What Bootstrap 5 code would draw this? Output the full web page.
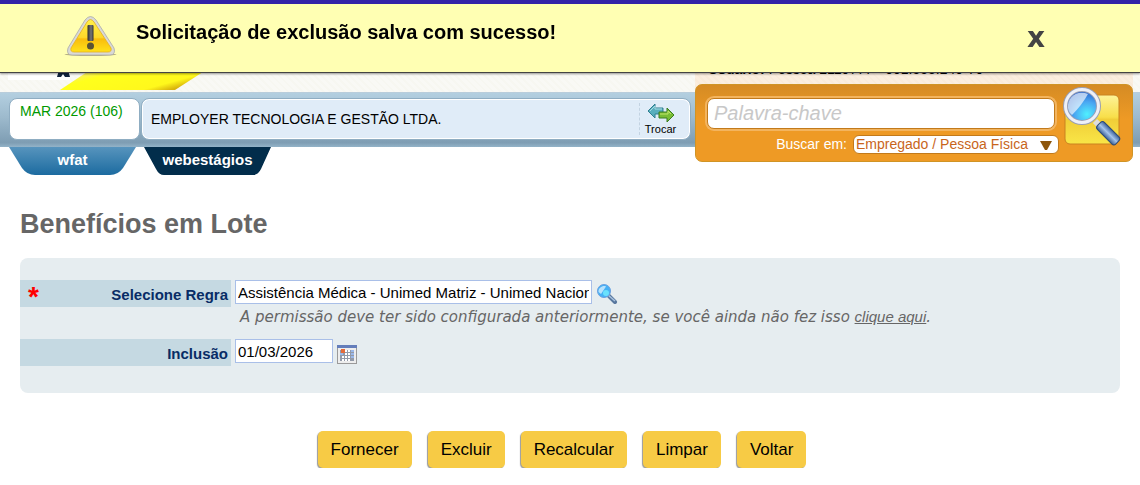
<!DOCTYPE html>
<html lang="pt-BR">
<head>
<meta charset="utf-8">
<meta name="viewport" content="width=device-width, initial-scale=1">
<title>Benefícios em Lote</title>
<link href="https://cdn.jsdelivr.net/npm/bootstrap@5.3.0/dist/css/bootstrap.min.css" rel="stylesheet">
<style>
body{font-family:"Liberation Sans",Arial,sans-serif;font-size:15px;line-height:20px;color:#000;background:#fff}
/* notice bar over the header */
.notice{height:73px;background:#ffffb3;border-top:4px solid #3322a8;border-bottom:1px solid #444;box-shadow:0 1px 2px rgba(0,0,0,.4);padding:0 95px 0 64px}
.notice-text{font-size:20px;line-height:24px;font-weight:700;padding-top:16px;margin-left:19px}
.notice-icon{margin-top:10px}
.notice-close{font:700 28px/32px "DejaVu Sans",sans-serif;color:#444;margin-top:18px}
/* header */
.top-strip{height:92px;background:repeating-linear-gradient(45deg,#f9f9f5 0 3px,#f7f7f1 3px 5px)}
.brand-art{display:block}
.user-area{right:7px;top:0;width:438px;height:92px;background:repeating-linear-gradient(45deg,#fbeedf 0 3px,#f9ebda 3px 5px);padding:59px 13px 0;font-size:14px}
.company-bar{height:55px;padding:5px 9px 7px;gap:1px;background:linear-gradient(#b3cfe0,#9dbacd 45%,#7e9db3 92%,#93b3c8);border-top:1px solid #b9cddb}
.box-white,.box-blue{border:1px solid #8fadc2;border-radius:8px;box-shadow:inset 0 0 0 1px #fff}
.box-white{width:131px;background:#fff;color:#009900;font-size:14px;line-height:18px;padding:3px 10px}
.box-blue{width:550px;background:#e0ecf8;font-size:14px;padding:0 9px}
.swap{border-left:1px dashed #c3d3e2;font-size:11px;line-height:12px;color:#000;width:42px}
.swap:hover{color:#000}
/* search */
.finder{right:7px;top:84px;width:438px;height:78px;border-radius:7px;border:1px solid #d09425;background:linear-gradient(#d58b24,#ee9a25 45%,#ee9a25);padding:13px 11px 7px 11px;z-index:5}
.finder-input{height:31px;border:1px solid #c27a1b;border-radius:7px;box-shadow:0 0 0 2px #f3b45e;padding:0 6px;font-size:20px;font-style:italic;width:348px}
.finder-input::placeholder{color:#c8c8c8;opacity:1}
.finder-row{margin-right:62px}
.finder-label{font-size:14px;color:#fff;margin-right:6px}
.finder-select{appearance:none;width:206px;height:19px;border:1px solid #c27a1b;border-radius:6px;color:#c8651b;background:#fff;font-size:14px;line-height:17px;padding:0 2px}
.select-arrow{right:7px;top:6px;pointer-events:none}
.finder-btn{width:60px;height:62px;right:9px;top:2px}
/* module tabs */
.module-tabs{padding-left:9px;gap:8px}
.module-tab{width:127px;height:28px;color:#fff;font-size:15px;font-weight:700;line-height:26px;clip-path:path("M0 0H127L114 21Q109 28 101 28H26Q18 28 13 21Z");background:linear-gradient(#5794bd,#1c6ba0)}
.module-tab.dark{background:#022d4b;clip-path:path("M0 0H127L117 22Q114 28 109 28H20Q15 28 12 22Z")}
.module-tab:hover{color:#fff}
/* form */
.page-title{font-size:27px;line-height:36px;font-weight:700;color:#666;margin:31px 0 16px}
.form-panel{background:#e6edf0;border-radius:8px;padding:22px 0 27px}
.field-label{width:211px;height:27px;background:#c5d9e2;color:#082c66;font-weight:700;line-height:30px;padding:0 3px 0 8px}
.req{color:red;font-size:28px;line-height:34px}
.field{border:1px solid #a9bfe8;height:24px;padding:0 2px;margin-left:4px;font-size:15px;background:#fff;color:#000}
.rule-field{width:357px}
.date-field{width:98px}
.hint{margin:0 0 12px 220px;color:#666;font:italic 15px/20px "DejaVu Sans",sans-serif}
.hint a{color:#666;font:italic 15px/20px "Liberation Sans",sans-serif}
.actions{margin-top:38px}
.action-btn{background:#f7cb45;border:0;border-radius:5px;height:37px;padding:0 13px;font-size:17px;line-height:35px;color:#000;margin-right:16px;box-shadow:-1px 1px 1px #999}
</style>
</head>
<body>
<div class="notice fixed-top d-flex align-items-start" role="alert">
  <svg class="notice-icon" width="53" height="44" viewBox="0 0 53 44" aria-hidden="true">
    <defs><linearGradient id="warn" x2="0" y2="1"><stop offset="0" stop-color="#fff04a"/><stop offset=".55" stop-color="#fdd92a"/><stop offset=".6" stop-color="#f9bd0c"/><stop offset="1" stop-color="#ffe11a"/></linearGradient>
    <linearGradient id="bang" x2="1"><stop offset="0" stop-color="#2d2d2d"/><stop offset=".6" stop-color="#777"/><stop offset="1" stop-color="#333"/></linearGradient></defs>
    <ellipse cx="26.500" cy="40.500" rx="26" ry="1.500" fill="#b6b184"/>
    <path d="M21 6Q26.500-1 32 6L50 34Q52 41 46 41H8Q2 41 4 34Z" fill="#d9d9d6" stroke="#aaa" stroke-width=".8"/>
    <path d="M23 8Q26.500 3 30 8L47 34Q48 38 44 38H10Q6 38 7 34Z" fill="url(#warn)" stroke="#e5b020" stroke-width=".8"/>
    <rect x="23.500" y="11" width="6" height="16" rx="1" fill="url(#bang)"/><circle cx="26.500" cy="32" r="3.500" fill="#5a5234"/>
  </svg>
  <div class="notice-text flex-grow-1">Solicitação de exclusão salva com sucesso!</div>
  <button type="button" class="notice-close btn p-0 border-0" aria-label="Fechar">x</button>
</div>

<header class="position-relative">
  <div class="top-strip">
    <svg class="brand-art" width="220" height="92" viewBox="0 0 220 92" aria-hidden="true">
      <defs><linearGradient id="swoosh" x2="1" y2=".5"><stop offset="0" stop-color="#e0c400"/><stop offset=".18" stop-color="#f7ee6a"/><stop offset=".35" stop-color="#ffff1c"/><stop offset=".85" stop-color="#fff81c"/><stop offset="1" stop-color="#d9b40c"/></linearGradient></defs>
      <path d="M8 0H70V80H8Z" fill="#fff"/>
      <path d="M90 70H206L175 90H60Z" fill="url(#swoosh)"/>
      <path d="M59 70H68L70 77H65L63 74L61 77H57Z" fill="#11243f"/>
    </svg>
  </div>
  <div class="user-area position-absolute text-nowrap overflow-hidden"><b>Usuário:</b> Pessoa 2110777 - 001.555.240-70</div>
  <div class="company-bar d-flex">
    <div class="box-white">MAR 2026 (106)</div>
    <div class="box-blue d-flex align-items-center justify-content-between">
      <span>EMPLOYER TECNOLOGIA E GESTÃO LTDA.</span>
      <a href="#" class="swap d-flex flex-column align-items-center text-decoration-none">
        <svg class="flex-shrink-0" width="28" height="20" viewBox="0 0 28 20" aria-hidden="true"><path d="M1 8L8 1V5H16V11H8V15Z" fill="#58aebd" stroke="#2f7f91"/><path d="M27 12L20 5V9H12V15H20V19Z" fill="#79bd35" stroke="#3b7d21"/><path d="M3 8L8 3V6H15" fill="none" stroke="#a8dde5"/><path d="M13 11H21V8L24 11" fill="none" stroke="#c1e56d"/></svg>
        <span>Trocar</span>
      </a>
    </div>
  </div>
  <form class="finder position-absolute d-flex flex-column">
    <input type="text" class="finder-input" placeholder="Palavra-chave" aria-label="Palavra-chave">
    <div class="finder-row d-flex align-items-center mt-auto ms-auto">
      <label for="scope" class="finder-label">Buscar em:</label>
      <div class="position-relative d-flex">
        <select id="scope" class="finder-select"><option>Empregado / Pessoa Física</option></select>
        <svg class="select-arrow position-absolute" width="12" height="9" viewBox="0 0 12 9" aria-hidden="true"><path d="M0 0H12L7 9H5Z" fill="#8d560c"/></svg>
      </div>
    </div>
    <button type="button" class="finder-btn btn p-0 border-0 position-absolute" aria-label="Buscar">
      <svg class="d-block" width="60" height="62" viewBox="0 0 60 62" aria-hidden="true">
        <defs><linearGradient id="tile" x2="0" y2="1"><stop offset="0" stop-color="#fdf39a"/><stop offset=".45" stop-color="#f8df4a"/><stop offset=".5" stop-color="#f0ce38"/><stop offset="1" stop-color="#f9e647"/></linearGradient>
        <radialGradient id="lens" cx=".65" cy=".75" r=".75"><stop offset="0" stop-color="#4ff0ff"/><stop offset=".5" stop-color="#4aa7f2"/><stop offset="1" stop-color="#2459c4"/></radialGradient>
        <linearGradient id="grip" x2="1" y2="0"><stop offset="0" stop-color="#3d6296"/><stop offset=".5" stop-color="#a4c3ea"/><stop offset="1" stop-color="#3b609a"/></linearGradient></defs>
        <rect x="2" y="8" width="54" height="49" rx="5" fill="url(#tile)" stroke="#c98220"/>
        <path d="M32 34L39 41" stroke="#ddd" stroke-width="6"/>
        <rect x="-5" y="0" width="10" height="26" rx="3" transform="translate(36 37) rotate(-45)" fill="url(#grip)" stroke="#2b4a78"/>
        <circle cx="19" cy="19" r="16.500" fill="url(#lens)" stroke="#999fb4" stroke-width="5"/>
        <circle cx="19" cy="19" r="16.500" fill="none" stroke="#eef0f7" stroke-width="3"/>
        <path d="M5 21C4 10 14 3 25 7Q19 18 9 28Q6 26 5 21Z" fill="#fff" opacity=".65"/>
      </svg>
    </button>
  </form>
  <nav class="module-tabs d-flex">
    <a href="#" class="module-tab text-center text-decoration-none">wfat</a>
    <a href="#" class="module-tab dark text-center text-decoration-none">webestágios</a>
  </nav>
</header>

<main class="px-3 mx-1">
  <h1 class="page-title">Benefícios em Lote</h1>
  <form>
    <div class="form-panel">
      <div class="d-flex align-items-start">
        <label for="rule" class="field-label d-flex justify-content-between"><span class="req">*</span><span>Selecione Regra</span></label>
        <input id="rule" type="text" class="field rule-field" value="Assistência Médica - Unimed Matriz - Unimed Nacional">
        <button type="button" class="btn p-0 border-0 ms-1 mt-1" aria-label="Pesquisar regra">
          <svg class="d-block" width="22" height="20" viewBox="0 0 22 20" aria-hidden="true"><path d="M12 11L19 18" stroke="#58779e" stroke-width="4" stroke-linecap="round"/><path d="M12 11L19 17" stroke="#a8c2df" stroke-width="1.500"/><circle cx="8" cy="7" r="6.500" fill="#45b1f5" stroke="#6aa0e0" stroke-width="1"/><path d="M2.500 8C2 4 7 1 10 2.500L5 10Z" fill="#d5efff" opacity=".8"/><circle cx="10" cy="9" r="3" fill="#72edff" opacity=".8"/></svg>
        </button>
      </div>
      <p class="hint">A permissão deve ter sido configurada anteriormente, se você ainda não fez isso <a href="#">clique aqui</a>.</p>
      <div class="d-flex align-items-start">
        <label for="date" class="field-label text-end">Inclusão</label>
        <input id="date" type="text" class="field date-field" value="01/03/2026">
        <button type="button" class="btn p-0 border-0 ms-1 mt-1" aria-label="Abrir calendário">
          <svg class="d-block" width="20" height="21" viewBox="0 0 20 21" aria-hidden="true"><rect x=".5" y="2.500" width="19" height="18" fill="#eee" stroke="#9a9a9a"/><rect y="2" width="20" height="3" fill="#647ebb"/><rect x="3" y="7" width="14" height="11" fill="#929aa9"/><g fill="#fff"><path d="M8 7h2v2H8zM11 7h2v2h-2zM8 10h2v2H8zM11 10h2v2h-2zM8 13h2v2H8zM11 13h2v2h-2zM8 16h2v2H8zM11 16h2v2h-2zM5 13h2v2H5zM5 16h2v2H5z"/></g><path d="M14 7h3v2h-3zM14 10h3v2h-3zM14 13h3v2h-3zM3 10h3v2H3z" fill="#9ab8ea"/><rect x="4" y="6" width="4" height="4" fill="#e46b3a"/></svg>
        </button>
      </div>
    </div>
    <div class="actions d-flex justify-content-center">
      <button type="button" class="action-btn">Fornecer</button>
      <button type="button" class="action-btn">Excluir</button>
      <button type="button" class="action-btn">Recalcular</button>
      <button type="button" class="action-btn">Limpar</button>
      <button type="button" class="action-btn">Voltar</button>
    </div>
  </form>
</main>
<script src="https://cdn.jsdelivr.net/npm/bootstrap@5.3.0/dist/js/bootstrap.bundle.min.js"></script>
</body>
</html>
